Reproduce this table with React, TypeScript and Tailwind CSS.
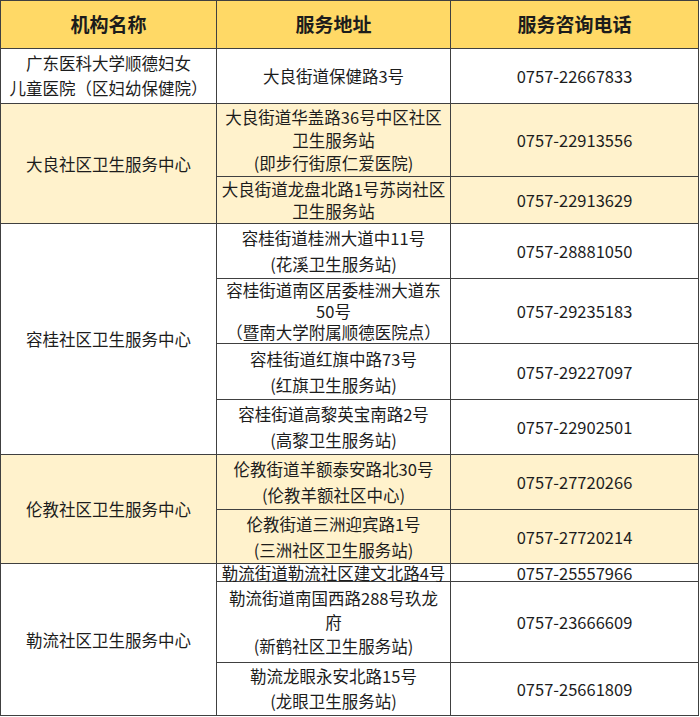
import React from 'react';

type SubRow = {
    h: string;
    lead: string;
    addr: string[];
    phone: string;
};

type Group = {
    name: string[];
    nameLead: string;
    bg: string;
    rows: SubRow[];
};

const groups: Group[] = [
    {
        name: ['广东医科大学顺德妇女', '儿童医院（区妇幼保健院）'],
        nameLead: 'leading-[25px]',
        bg: 'bg-white',
        rows: [{ h: 'h-[55px]', lead: 'leading-[24px]', addr: ['大良街道保健路3号'], phone: '0757-22667833' }]
    },
    {
        name: ['大良社区卫生服务中心'],
        nameLead: 'leading-[24px]',
        bg: 'bg-[#fff2cc]',
        rows: [
            { h: 'h-[73px]', lead: 'leading-[23px]', addr: ['大良街道华盖路36号中区社区', '卫生服务站', '(即步行街原仁爱医院)'], phone: '0757-22913556' },
            { h: 'h-[47px]', lead: 'leading-[22px]', addr: ['大良街道龙盘北路1号苏岗社区', '卫生服务站'], phone: '0757-22913629' }
        ]
    },
    {
        name: ['容桂社区卫生服务中心'],
        nameLead: 'leading-[24px]',
        bg: 'bg-white',
        rows: [
            { h: 'h-[55px]', lead: 'leading-[26px]', addr: ['容桂街道桂洲大道中11号', '(花溪卫生服务站)'], phone: '0757-28881050' },
            { h: 'h-[65px]', lead: 'leading-[21px]', addr: ['容桂街道南区居委桂洲大道东', '50号', '（暨南大学附属顺德医院点）'], phone: '0757-29235183' },
            { h: 'h-[56px]', lead: 'leading-[26px]', addr: ['容桂街道红旗中路73号', '(红旗卫生服务站)'], phone: '0757-29227097' },
            { h: 'h-[55px]', lead: 'leading-[26px]', addr: ['容桂街道高黎英宝南路2号', '(高黎卫生服务站)'], phone: '0757-22902501' }
        ]
    },
    {
        name: ['伦教社区卫生服务中心'],
        nameLead: 'leading-[24px]',
        bg: 'bg-[#fff2cc]',
        rows: [
            { h: 'h-[55px]', lead: 'leading-[26px]', addr: ['伦教街道羊额泰安路北30号', '(伦教羊额社区中心)'], phone: '0757-27720266' },
            { h: 'h-[54px]', lead: 'leading-[26px]', addr: ['伦教街道三洲迎宾路1号', '(三洲社区卫生服务站)'], phone: '0757-27720214' }
        ]
    },
    {
        name: ['勒流社区卫生服务中心'],
        nameLead: 'leading-[24px]',
        bg: 'bg-white',
        rows: [
            { h: 'h-[18px]', lead: 'leading-[16px]', addr: ['勒流街道勒流社区建文北路4号'], phone: '0757-25557966' },
            { h: 'h-[81px]', lead: 'leading-[24px]', addr: ['勒流街道南国西路288号玖龙', '府', '(新鹤社区卫生服务站)'], phone: '0757-23666609' },
            { h: 'h-[53px]', lead: 'leading-[25px]', addr: ['勒流龙眼永安北路15号', '(龙眼卫生服务站)'], phone: '0757-25661809' }
        ]
    }
];

const cell = 'border border-[#404040] p-0 text-center align-middle';

const App: React.FC = () => {
    return (
        <div className="min-h-screen bg-white font-['Noto_Sans_CJK_SC','Noto_Sans',sans-serif] text-[#1c1c1c]">
            <table className="w-[698px] table-fixed border-collapse">
                <colgroup>
                    <col className="w-[216px]" />
                    <col className="w-[234px]" />
                    <col className="w-[248px]" />
                </colgroup>
                <thead>
                    <tr className="h-[48px] bg-[#ffd966] text-[19px] font-bold">
                        <th className={cell}>机构名称</th>
                        <th className={cell}>服务地址</th>
                        <th className={cell}>服务咨询电话</th>
                    </tr>
                </thead>
                <tbody className="text-[16.5px]">
                    {groups.map((g) =>
                        g.rows.map((r, i) => (
                            <tr key={g.name[0] + i} className={`${r.h} ${g.bg}`}>
                                {i === 0 && (
                                    <td rowSpan={g.rows.length} className={`${cell} ${g.nameLead}`}>
                                        {g.name.map((line) => (
                                            <div key={line} className="whitespace-nowrap">{line}</div>
                                        ))}
                                    </td>
                                )}
                                <td className={`${cell} ${r.lead}`}>
                                    {r.addr.map((line) => (
                                        <div key={line} className="whitespace-nowrap">{line}</div>
                                    ))}
                                </td>
                                <td className={`${cell} leading-[16px]`}>{r.phone}</td>
                            </tr>
                        ))
                    )}
                </tbody>
            </table>
        </div>
    );
};

export default App;
